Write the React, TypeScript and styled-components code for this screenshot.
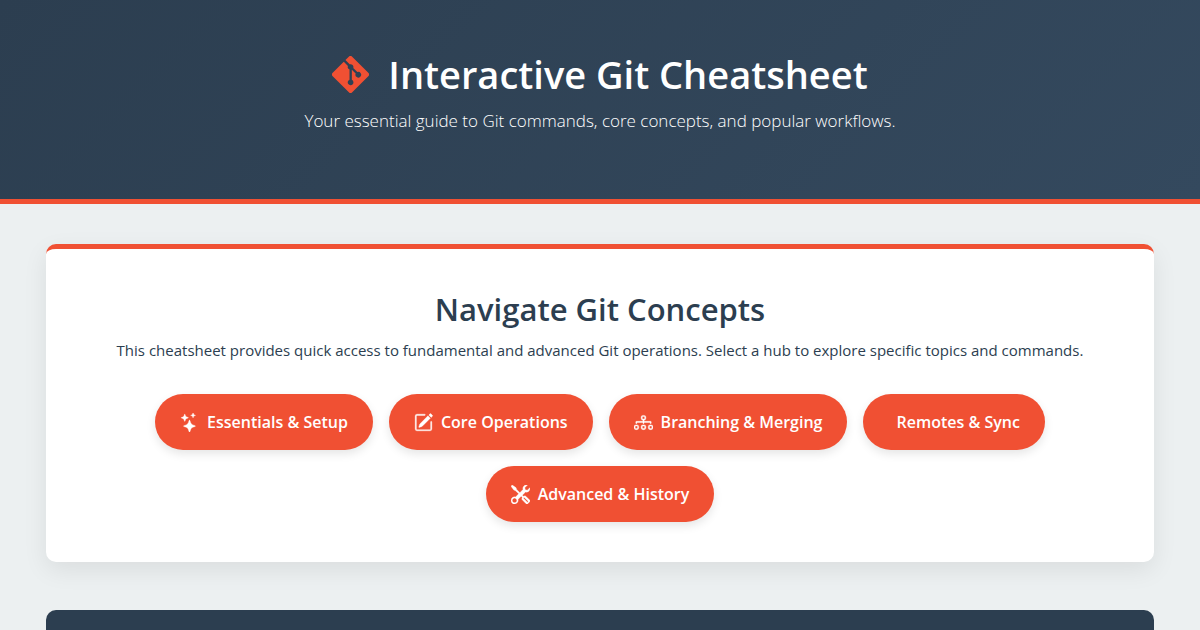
import React from 'react';
import styled, { createGlobalStyle } from 'styled-components';
import { BsDiagram3, BsGit, BsPencilSquare, BsStars, BsTools } from 'react-icons/bs';

const GlobalStyle = createGlobalStyle`
  *, *::before, *::after { box-sizing: border-box; }
  body {
    margin: 0;
    background: #ecf0f1;
    color: #2c3e50;
    font-family: "Segoe UI", "Open Sans", "Noto Sans", sans-serif;
    font-size: 15px;
    line-height: 24px;
  }
`;

const Header = styled.header`
  padding: 48px 16px 65px;
  border-bottom: 5px solid #f05033;
  background: linear-gradient(135deg, #2c3e50, #34495e);
  color: #ffffff;
  text-align: center;
`;

const Title = styled.h1`
  display: flex;
  align-items: center;
  justify-content: center;
  gap: 19px;
  margin: 0 0 8px;
  font-size: 38px;
  font-weight: 600;
  line-height: 52px;

  svg {
    color: #f05033;
  }
`;

const Tagline = styled.p`
  margin: 0;
  font-size: 17px;
  font-weight: 300;
  line-height: 26px;
`;

const Main = styled.main`
  display: flex;
  flex-direction: column;
  gap: 48px;
  max-width: 1140px;
  margin: 0 auto;
  padding: 40px 16px;
`;

const Card = styled.section`
  padding: 40px;
  border-top: 5px solid #f05033;
  border-radius: 10px;
  background: #ffffff;
  box-shadow: 0 8px 25px rgba(0, 0, 0, 0.08);
  text-align: center;
`;

const CardTitle = styled.h2`
  margin: 0 0 8px;
  font-size: 31px;
  font-weight: 600;
  line-height: 41px;
`;

const CardText = styled.p`
  margin: 0 0 32px;
`;

const HubList = styled.nav`
  display: flex;
  flex-wrap: wrap;
  justify-content: center;
  gap: 16px;
`;

const HubButton = styled.button`
  display: inline-flex;
  align-items: center;
  gap: 8px;
  min-height: 56px;
  padding: 12px 25px;
  border: 0;
  border-radius: 50px;
  background: #f05033;
  box-shadow: 0 4px 10px rgba(0, 0, 0, 0.1);
  color: #ffffff;
  font: inherit;
  font-size: 16px;
  font-weight: 600;
  cursor: pointer;

  svg {
    stroke-width: 0.3;
  }
`;

const EmptyIcon = styled.span`
  width: 0;
`;

const DarkPanel = styled.section`
  min-height: 160px;
  border-radius: 10px;
  background: #2c3e50;
`;

const hubs = [
  { label: 'Essentials & Setup', Icon: BsStars },
  { label: 'Core Operations', Icon: BsPencilSquare },
  { label: 'Branching & Merging', Icon: BsDiagram3 },
  { label: 'Remotes & Sync', Icon: null },
  { label: 'Advanced & History', Icon: BsTools },
];

export default function App() {
  return (
    <>
      <GlobalStyle />
      <Header>
        <Title>
          <BsGit size={37} aria-hidden />
          Interactive Git Cheatsheet
        </Title>
        <Tagline>Your essential guide to Git commands, core concepts, and popular workflows.</Tagline>
      </Header>
      <Main>
        <Card>
          <CardTitle>Navigate Git Concepts</CardTitle>
          <CardText>
            This cheatsheet provides quick access to fundamental and advanced Git operations. Select a hub to
            explore specific topics and commands.
          </CardText>
          <HubList aria-label="Git topics">
            {hubs.map(({ label, Icon }) => (
              <HubButton key={label} type="button">
                {Icon ? <Icon size={19} aria-hidden /> : <EmptyIcon />}
                {label}
              </HubButton>
            ))}
          </HubList>
        </Card>
        <DarkPanel />
      </Main>
    </>
  );
}
